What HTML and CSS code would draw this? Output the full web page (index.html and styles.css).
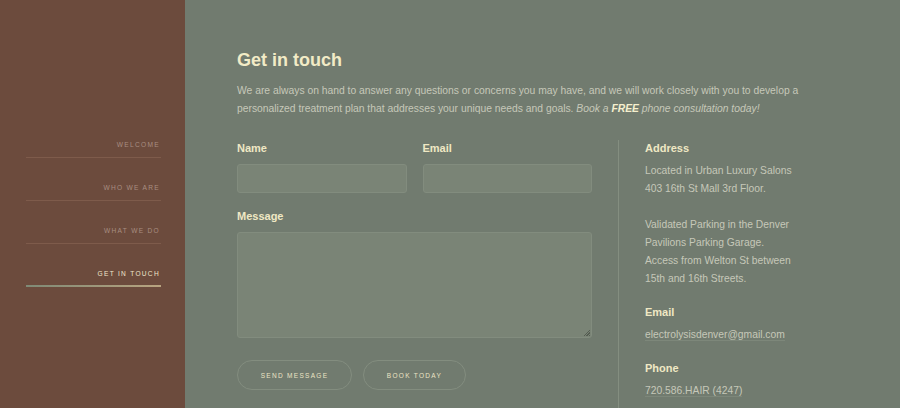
FILE: index.html
```html
<!DOCTYPE html>
<html>
<head>
<meta charset="utf-8">
<link rel="stylesheet" href="styles.css">
</head>
<body>
<div class="page">
  <aside class="sidebar">
    <nav class="nav">
      <a class="nav-item">WELCOME</a>
      <a class="nav-item">WHO WE ARE</a>
      <a class="nav-item">WHAT WE DO</a>
      <a class="nav-item active">GET IN TOUCH</a>
    </nav>
  </aside>
  <main class="main">
    <h1 class="title">Get in touch</h1>
    <p class="intro">We are always on hand to answer any questions or concerns you may have, and we will work closely with you to develop a personalized treatment plan that addresses your unique needs and goals. <em>Book a <strong>FREE</strong> phone consultation today!</em></p>
    <div class="cols">
      <form class="form">
        <div class="row">
          <div class="field">
            <label class="label">Name</label>
            <div class="input"></div>
          </div>
          <div class="field">
            <label class="label">Email</label>
            <div class="input"></div>
          </div>
        </div>
        <div class="field">
          <label class="label">Message</label>
          <div class="textarea"><span class="grip"></span></div>
        </div>
        <div class="actions">
          <span class="btn send">SEND MESSAGE</span>
          <span class="btn book">BOOK TODAY</span>
        </div>
      </form>
      <section class="info">
        <h3 class="info-h">Address</h3>
        <p class="info-p">Located in Urban Luxury Salons<br>403 16th St Mall 3rd Floor.<br><br>Validated Parking in the Denver<br>Pavilions Parking Garage.<br>Access from Welton St between<br>15th and 16th Streets.</p>
        <h3 class="info-h">Email</h3>
        <p class="info-p"><span class="link">electrolysisdenver@gmail.com</span></p>
        <h3 class="info-h">Phone</h3>
        <p class="info-p"><span class="link">720.586.HAIR (4247)</span></p>
      </section>
    </div>
  </main>
</div>
</body>
</html>
```

FILE: styles.css
```css
* { box-sizing: border-box; }
html, body { margin: 0; padding: 0; }
body {
  font-family: "Liberation Sans", Arial, sans-serif;
  background: #717b6f;
  width: 900px;
  height: 408px;
  overflow: hidden;
}
.page {
  display: flex;
  height: 408px;
}
.sidebar {
  width: 185px;
  flex: none;
  background: #6c4b3d;
  padding: 115px 25px 0 26px;
}
.nav {
  display: flex;
  flex-direction: column;
}
.nav-item {
  display: block;
  text-align: right;
  font-size: 6.6px;
  line-height: 10px;
  letter-spacing: 1.3px;
  color: #a88e82;
  padding: 25px 1px 7px 0;
  border-bottom: 1px solid #7e5b4b;
  margin-right: -1px;
}
.nav-item.active {
  color: #efe6cc;
  border-bottom: none;
  background-image: linear-gradient(90deg, #7f8a76, #b9a480);
  background-size: 100% 2px;
  background-position: bottom;
  background-repeat: no-repeat;
  padding-bottom: 8px;
}
.main {
  flex: 1;
  padding: 48px 0 0 52px;
}
.title {
  margin: 0;
  font-size: 18px;
  font-weight: bold;
  color: #f2ebc6;
  line-height: 24px;
}
.intro {
  margin: 10px 0 0;
  width: 585px;
  font-size: 10.33px;
  line-height: 18px;
  color: #c6c8b9;
}
.intro em strong { color: #f5efce; }
.cols {
  display: flex;
  margin-top: 14px;
}
.form {
  width: 355px;
  flex: none;
  padding-top: 10px;
}
.row {
  display: flex;
  gap: 16px;
}
.row .field { flex: 1; }
.label {
  display: block;
  font-size: 11px;
  font-weight: bold;
  color: #efe8c4;
  line-height: 13px;
  margin-bottom: 9px;
}
.input {
  height: 29px;
  background: #7a8476;
  border: 1px solid #828c7e;
  border-radius: 3px;
  margin-bottom: 17px;
}
.textarea {
  position: relative;
  height: 106px;
  background: #7a8476;
  border: 1px solid #828c7e;
  border-radius: 3px;
}
.grip {
  position: absolute;
  right: 1px;
  bottom: 1px;
  width: 7px;
  height: 7px;
  background: repeating-linear-gradient(135deg, transparent 0 1px, #555d52 1px 2px);
  clip-path: polygon(100% 0, 100% 100%, 0 100%);
}
.actions {
  display: flex;
  gap: 11px;
  margin-top: 22px;
}
.btn {
  display: flex;
  align-items: center;
  justify-content: center;
  height: 30px;
  border: 1px solid #838d7f;
  border-radius: 15px;
  font-size: 6.5px;
  letter-spacing: 1.3px;
  color: #ebe4c5;
}
.send { width: 115px; }
.book { width: 103px; }
.info {
  margin: 8px 0 0 26px;
  border-left: 1px solid #848e80;
  padding: 2px 0 20px 26px;
  flex: 1;
}
.info-h {
  margin: 0;
  font-size: 11px;
  font-weight: bold;
  color: #efe8c4;
  line-height: 13px;
}
.info-p {
  margin: 7px 0 18px;
  font-size: 10.3px;
  line-height: 18px;
  color: #c6c8b9;
}
.link {
  border-bottom: 1px solid #7d877a;
}
```
